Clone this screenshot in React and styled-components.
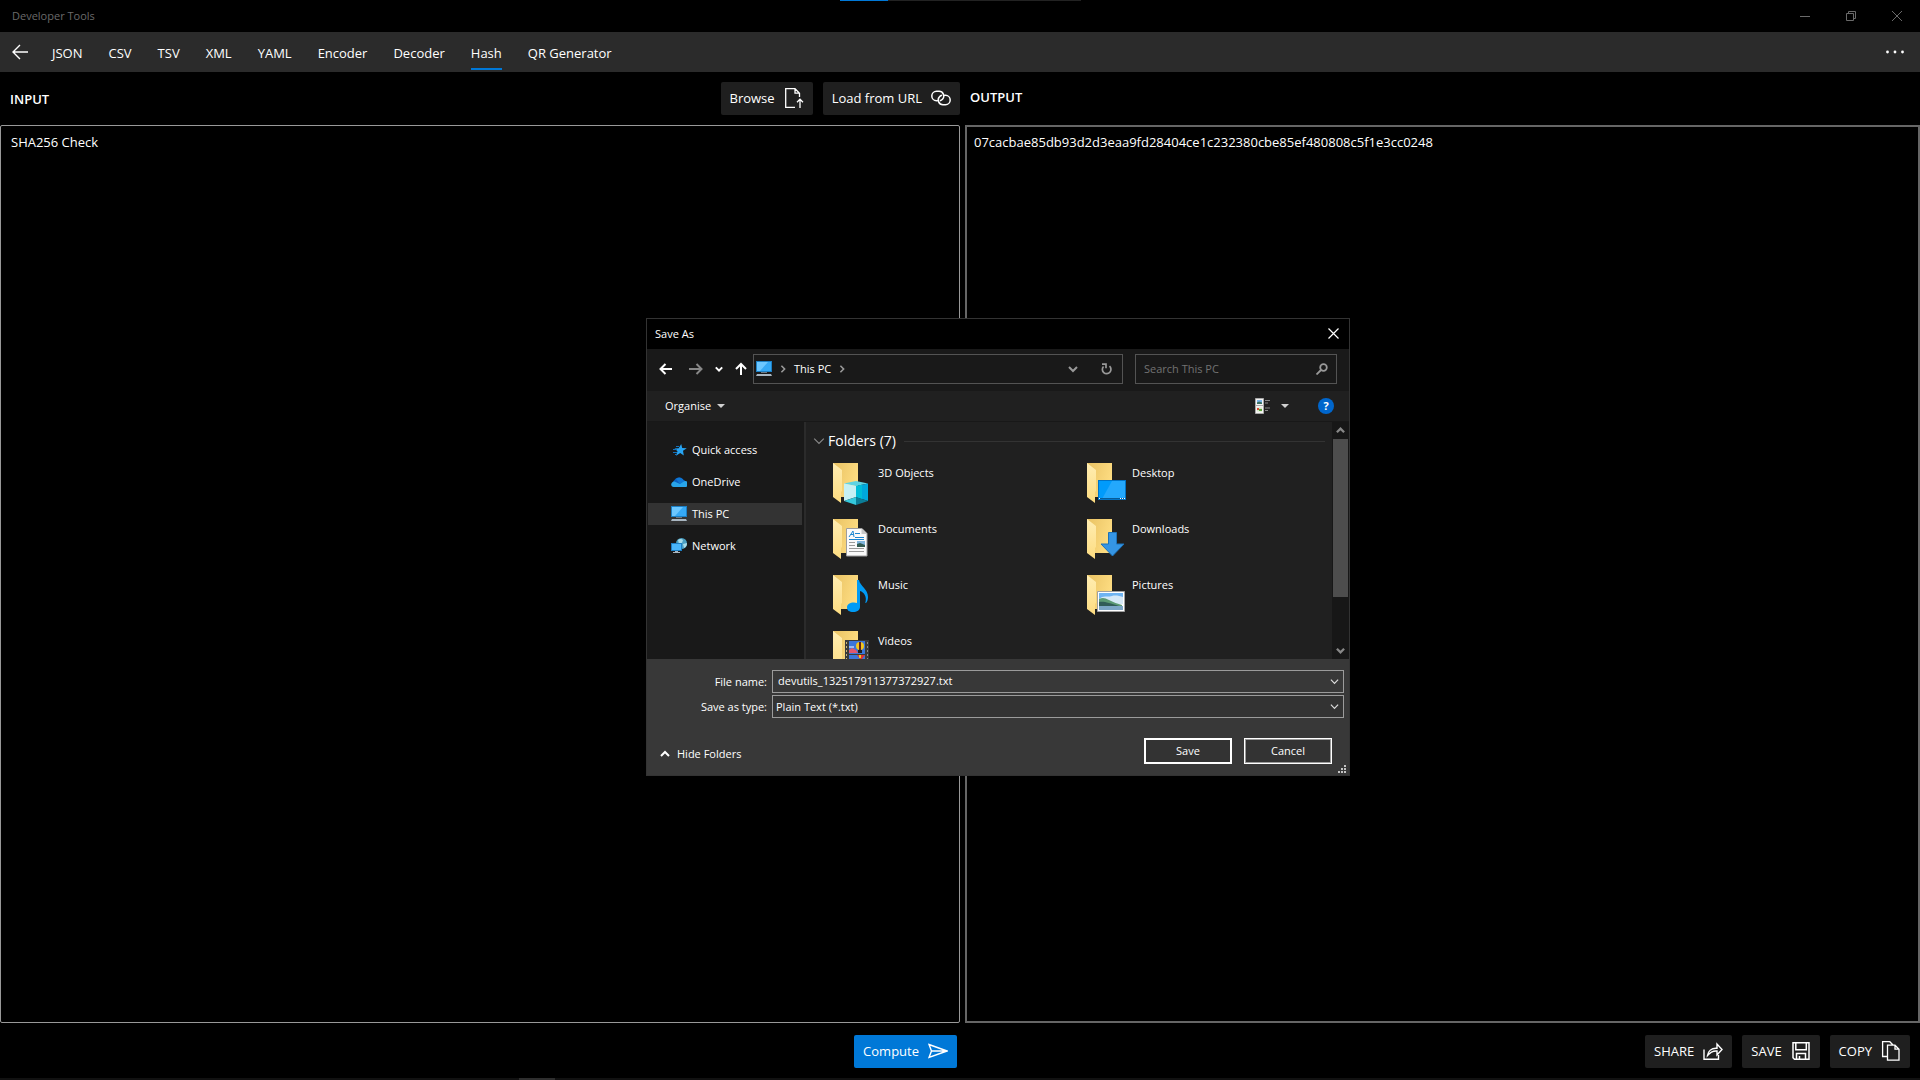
import React, { useState } from 'react';
import styled, { createGlobalStyle } from 'styled-components';

const tabs = ['JSON', 'CSV', 'TSV', 'XML', 'YAML', 'Encoder', 'Decoder', 'Hash', 'QR Generator'];

const places = [
  { name: 'Quick access', icon: 'star' },
  { name: 'OneDrive', icon: 'cloud' },
  { name: 'This PC', icon: 'pc', selected: true },
  { name: 'Network', icon: 'network' },
];

const folders = [
  { name: '3D Objects', kind: 'cube' },
  { name: 'Desktop', kind: 'desktop' },
  { name: 'Documents', kind: 'document' },
  { name: 'Downloads', kind: 'download' },
  { name: 'Music', kind: 'music' },
  { name: 'Pictures', kind: 'picture' },
  { name: 'Videos', kind: 'video' },
];

const GlobalStyle = createGlobalStyle`
  * {
    box-sizing: border-box;
  }
  body {
    margin: 0;
    background: #000;
    color: #fff;
    font-family: 'Open Sans', 'Noto Sans', sans-serif;
    font-size: 13px;
    line-height: 20px;
  }
  button, input, select, textarea {
    font: inherit;
    color: inherit;
    margin: 0;
  }
  svg {
    display: block;
    flex: none;
  }
`;

const glyphs = {
  back: <path strokeWidth="1.400" d="M18 10H3M10 3L3 10l7 7" />,
  browse: <path strokeWidth="1.300" d="M11 19.300H1.700V.7h9.300l4.500 4.500V9M11 .7v4.500h4.500M16 20v-8.500M13 14.200l3-3 3 3" />,
  link: (
    <path
      strokeWidth="1.500"
      d="M6.500 12.700h-1a4.700 4.700 0 0 1 0-9.400h2.500a4.700 4.700 0 0 1 3.500 7.900c-.8.900-1.600 1.300-2.500 1.500M13.500 7.300h1a4.700 4.700 0 0 1 0 9.400h-2.500a4.700 4.700 0 0 1-3.500-7.900c.8-.9 1.600-1.300 2.500-1.500"
    />
  ),
  send: <path strokeWidth="1.400" d="M1 3.500L19 10 1 16.500 3.500 10zM3.500 10H19" />,
  share: <path strokeWidth="1.400" d="M1 8.500v9.800h14.500V14M4.500 14.500c.5-4.500 4-7.300 8.500-7.300h1V3l5 5.500-5 5.500V10h-1c-3.500 0-6 1.500-8.500 4.500z" />,
  save: <path strokeWidth="1.500" d="M2 1.800h16v16.500H3.500L2 16.800zM4.800 1.800v7h10.500v-7M5.500 18v-5.500h9V18M8.500 18v-3" />,
  copy: <path strokeWidth="1.300" d="M6 15.500H1.600V.7h7.200L12 4M6.500 4.200h7.500l4 4v11H6.500zM14 4.200v4h4" />,
};

const Glyph = ({ name, size = 20 }) => (
  <svg width={size} height={size} viewBox="0 0 20 20" fill="none" stroke="currentColor" aria-hidden="true">
    {glyphs[name]}
  </svg>
);

const Chevron = ({ dir = 'down', size = 9, width = 1.5 }) => {
  const paths = { down: 'M1 3l4 4 4-4', up: 'M1 7l4-4 4 4', right: 'M3 1l4 4-4 4' };
  return (
    <svg width={size} height={size} viewBox="0 0 10 10" fill="none" stroke="currentColor" strokeWidth={width} aria-hidden="true">
      <path d={paths[dir]} />
    </svg>
  );
};

const Caret = () => (
  <svg width="8" height="4" viewBox="0 0 8 4" fill="#d0d0d0" aria-hidden="true">
    <path d="M0 0h8L4 4z" />
  </svg>
);

const Monitor = () => (
  <g>
    <path d="M0 0h16v11H0z" fill="#1c7fc4" />
    <path d="M1 1h14v9H1z" fill="#36a9f5" />
    <path d="M1 1h11L4 10H1z" fill="#6cc7ff" />
    <path d="M5 11h6v1H5z" fill="#6d7a85" />
    <path d="M1 13h14l1 2H0z" fill="#a9b6c1" />
  </g>
);

const PlaceIcon = ({ name }) => (
  <svg width="16" height="16" viewBox="0 0 16 16" aria-hidden="true">
    {name === 'star' && (
      <g>
        <path d="M10.200 2l1 4 4.600.2-3.800 2.600.8 4.700-3.600-2.600-4.200 2.900 1.500-4.500L3.500 6.500l4.200-.3z" fill="#27a4f2" />
        <path d="M5 4.500h3M2 7.500h4M2 10.500h4M4 12.500h2" stroke="#1372bd" />
      </g>
    )}
    {name === 'cloud' && (
      <g>
        <path d="M2.500 11A3.500 3.500 0 0 1 3.500 6 5 5 0 0 1 12 5.500 4 4 0 0 1 14 12z" fill="#0a5fc0" />
        <path d="M5 5a5 5 0 0 1 8 2L9 10z" fill="#0f78d4" />
        <path d="M1 12.500A3 3 0 0 1 3.500 7.500L9 10l4-2.800A2.900 2.900 0 0 1 15 13H2.500z" fill="#28a5ea" />
      </g>
    )}
    {name === 'pc' && <Monitor />}
    {name === 'network' && (
      <g>
        <circle cx="10.500" cy="5.500" r="5.500" fill="#4a9fc2" />
        <path d="M7 2c2-1.500 4-1 5 0l-1 3-3 1zM12 6l4-1c0 3-1 4-3 5z" fill="#a9dbe8" />
        <path d="M0 5h11v8H0z" fill="#1c7fc4" />
        <path d="M1 6h9v6H1z" fill="#4ab6fa" />
        <path d="M4 13h3v1h2v1H2v-1h2z" fill="#a9b6c1" />
      </g>
    )}
  </svg>
);

const overlays = {
  cube: (
    <g>
      <path d="M23 18l12 2.500L23 23l-12-2.500z" fill="#5ed3e3" />
      <path d="M11 20.500L23 23v11l-12 4z" fill="#c6f0f4" />
      <path d="M23 23l12-2.500V38l-12-4z" fill="#00a8dc" />
      <path d="M23 23l6-1.300V36l-6-2z" fill="#00bdd8" />
      <path d="M11 38l12-4v8z" fill="#35c8dc" />
      <path d="M35 38l-12-4v8z" fill="#0b7d97" />
    </g>
  ),
  desktop: (
    <g>
      <path d="M11 17h28v20H11z" fill="#0073c6" />
      <path d="M12 18h26v18H12z" fill="#009bfb" />
      <path d="M25 18h13v18H15z" fill="#24a8fc" />
      <path d="M12 35h26v1H12z" fill="#075b96" />
      <path d="M12 35h1v1h-1zM33 35h1v1h-1zM35 35h1v1h-1zM37 35h1v1h-1z" fill="#fff" />
    </g>
  ),
  document: (
    <g>
      <path d="M13.500 9.500H29l5 5v22.500H13.500z" fill="#fafafa" stroke="#9d9d9d" />
      <path d="M28.500 9.500l5.500 5.500h-5.500z" fill="#c9c9c9" />
      <path d="M16 18l4-6 1 6M17.500 15.500h3M22 14.500h5M22 18.500h9M16 20.500h15" stroke="#1c86d1" fill="none" />
      <path d="M16 23.500h6M16 26.500h6M16 29.500h15M16 32.500h15" stroke="#9a9a9a" />
      <path d="M24 22h8v6h-8z" fill="#7fb4dc" />
      <path d="M24 25l3-1 5 2v2h-8z" fill="#345c52" />
    </g>
  ),
  download: (
    <path d="M21.500 13.500h8V25H37L25.500 37 14 25h7.500z" fill="#3595e4" stroke="#1d72b8" />
  ),
  music: (
    <path
      d="M24 5h2c1 6 9 9 9 17 0 3-1 5-2 6-.500 0-1-.500-.500-1C34 22 31 17 27 16v16c0 3-3 5-7 5-3.500 0-6-1.500-6-4.500 0-3.500 3-5 7-5 1 0 2 .2 3 .5z"
      fill="#009bf5"
    />
  ),
  picture: (
    <g>
      <path d="M10.500 16.500h27v20h-27z" fill="#fff" stroke="#a0a0a0" />
      <path d="M12 18h24v9H12z" fill="#6fb4f2" />
      <path d="M15 22c5-1 7 0 10-1s8 0 11 1v7H12v-5z" fill="#d6e9f7" />
      <path d="M12 24c4-2 6-1 10 1 4 2 9 4 13 5v1H12z" fill="#5b9a74" />
      <path d="M12 27c5-1 10 1 20 4H12z" fill="#315c58" />
      <path d="M12 31h24v4H12z" fill="#7ba6c6" />
    </g>
  ),
  video: (
    <g>
      <path d="M12 9h24v30H12z" fill="#3a3a3a" />
      <path d="M16 10h16v13H16zM16 24h16v13H16z" fill="#3b76da" />
      <path d="M13.500 11v26" stroke="#c9b878" strokeDasharray="2 2" />
      <path d="M34.500 11v26" stroke="#8a8a8a" strokeDasharray="2 2" />
      <path d="M16 19l3-2 4 2 2 3h-9z" fill="#e0566e" />
      <circle cx="27" cy="15" r="4" fill="#f3c51d" />
      <path d="M27 11v8" stroke="#5e2020" strokeWidth="2" />
      <path d="M25 19h4v3h-4z" fill="#1f1f1f" />
      <path d="M16 15h5v2h-5z" fill="#9cbcf0" />
      <path d="M24 24h8l-3 4h-2z" fill="#e13232" />
      <path d="M26 24h2v3h-2z" fill="#f3c51d" />
    </g>
  ),
};

const FolderIcon = ({ kind }) => (
  <svg width="40" height="42" viewBox="0 0 40 42" aria-hidden="true">
    <defs>
      <linearGradient id={`back-${kind}`} x1="0" y1="0" x2="1" y2="0.400">
        <stop offset="0" stopColor="#e9c263" />
        <stop offset="1" stopColor="#fddc81" />
      </linearGradient>
      <linearGradient id={`flap-${kind}`} x1="0" y1="0" x2="0" y2="1">
        <stop offset="0" stopColor="#ffedb2" />
        <stop offset="1" stopColor="#fddc80" />
      </linearGradient>
    </defs>
    <path d="M0 0h25v34H0z" fill={`url(#back-${kind})`} />
    <path d="M0 0l9 7v21l-1 1v11L0 34z" fill={`url(#flap-${kind})`} />
    {overlays[kind]}
  </svg>
);

const App = () => {
  const [text, setText] = useState('SHA256 Check');
  const [fileName, setFileName] = useState('devutils_132517911377372927.txt');

  return (
    <Page>
      <GlobalStyle />
      <Progress>
        <ProgressDone />
      </Progress>
      <TitleBar>
        <AppTitle>Developer Tools</AppTitle>
        <WindowButton aria-label="Minimise">
          <svg width="10" height="10" viewBox="0 0 10 10" stroke="currentColor" fill="none"><path d="M0 5.500h10" /></svg>
        </WindowButton>
        <WindowButton aria-label="Restore">
          <svg width="10" height="10" viewBox="0 0 10 10" stroke="currentColor" fill="none"><path d="M.5 2.500h7v7h-7zM2.500 2.500v-2h7v7h-2" /></svg>
        </WindowButton>
        <WindowButton aria-label="Close">
          <svg width="10" height="10" viewBox="0 0 10 10" stroke="currentColor" fill="none"><path d="M0 0l10 10M10 0L0 10" /></svg>
        </WindowButton>
      </TitleBar>

      <NavBar>
        <NavButton aria-label="Back"><Glyph name="back" /></NavButton>
        {tabs.map((tab) => (
          <Tab key={tab} href={`#${tab}`} $active={tab === 'Hash'}>{tab}</Tab>
        ))}
        <MoreButton aria-label="More">
          <svg width="18" height="4" viewBox="0 0 18 4" fill="currentColor">
            <circle cx="1.500" cy="2" r="1.400" />
            <circle cx="9" cy="2" r="1.400" />
            <circle cx="16.500" cy="2" r="1.400" />
          </svg>
        </MoreButton>
      </NavBar>

      <Workspace>
        <Pane>
          <PaneHeader>
            <PaneTitle htmlFor="source">INPUT</PaneTitle>
            <Action>Browse<Glyph name="browse" /></Action>
            <Action>Load from URL<Glyph name="link" /></Action>
          </PaneHeader>
          <SourceBox id="source" value={text} onChange={(e) => setText(e.target.value)} spellCheck={false} />
          <PaneFooter $end={3}>
            <Action $primary>Compute<Glyph name="send" /></Action>
          </PaneFooter>
        </Pane>
        <Pane $inset>
          <PaneHeader>
            <PaneTitle htmlFor="result" $raised>OUTPUT</PaneTitle>
          </PaneHeader>
          <ResultBox
            id="result"
            readOnly
            spellCheck={false}
            value="07cacbae85db93d2d3eaa9fd28404ce1c232380cbe85ef480808c5f1e3cc0248"
          />
          <PaneFooter $end={10}>
            <Action>SHARE<Glyph name="share" /></Action>
            <Action>SAVE<Glyph name="save" /></Action>
            <Action>COPY<Glyph name="copy" /></Action>
          </PaneFooter>
        </Pane>
      </Workspace>
      <TaskStrip><TaskMark /></TaskStrip>

      <Dialog role="dialog" aria-labelledby="dialog-title">
        <DialogTitle>
          <span id="dialog-title">Save As</span>
          <PlainButton aria-label="Close dialog">
            <svg width="11" height="11" viewBox="0 0 11 11" stroke="currentColor" strokeWidth="1.200"><path d="M.5.5l10 10M10.500.5l-10 10" /></svg>
          </PlainButton>
        </DialogTitle>

        <AddressRow>
          <HistoryButtons>
            <PlainButton aria-label="Back">
              <svg width="14" height="12" viewBox="0 0 14 12" fill="none" stroke="#fff" strokeWidth="2"><path d="M13 6H2M6.500 1l-5 5 5 5" /></svg>
            </PlainButton>
            <PlainButton aria-label="Forward">
              <svg width="14" height="12" viewBox="0 0 14 12" fill="none" stroke="#888" strokeWidth="2"><path d="M0 6h12M7.500 1l5 5-5 5" /></svg>
            </PlainButton>
            <PlainButton aria-label="Recent locations"><Chevron size={8} width={2.5} /></PlainButton>
            <PlainButton aria-label="Up">
              <svg width="12" height="14" viewBox="0 0 12 14" fill="none" stroke="#fff" strokeWidth="2"><path d="M6 13V2M1 7l5-5 5 5" /></svg>
            </PlainButton>
          </HistoryButtons>
          <AddressBox>
            <svg width="16" height="16" viewBox="0 0 16 16" aria-hidden="true"><Monitor /></svg>
            <Crumb><Chevron dir="right" size={8} width={2} /></Crumb>
            <PlainButton>This PC</PlainButton>
            <Crumb><Chevron dir="right" size={8} width={2} /></Crumb>
            <AddressTools>
              <PlainButton aria-label="Previous locations"><Chevron size={10} width={2} /></PlainButton>
              <PlainButton aria-label="Refresh">
                <svg width="11" height="12" viewBox="0 0 11 12" fill="none" stroke="currentColor" strokeWidth="1.700">
                  <path d="M8.500 3.200A4.300 4.300 0 1 1 2.500 3.500M1 1.200h4v4" />
                </svg>
              </PlainButton>
            </AddressTools>
          </AddressBox>
          <SearchBox>
            <SearchInput type="text" placeholder="Search This PC" aria-label="Search This PC" />
            <svg width="12" height="12" viewBox="0 0 12 12" fill="none" stroke="currentColor" strokeWidth="1.800" aria-hidden="true">
              <circle cx="7.500" cy="4.500" r="3.300" />
              <path d="M5 7l-4.500 4.500" />
            </svg>
          </SearchBox>
        </AddressRow>

        <CommandBar>
          <PlainButton>Organise<Caret /></PlainButton>
          <ViewTools>
            <PlainButton aria-label="Change view">
              <svg width="16" height="16" viewBox="0 0 16 16">
                <path d="M.5.5h8v15h-8z" fill="#f4f4f4" stroke="#aaa" />
                <path d="M2 2h5v4H2z" fill="#7db5e8" />
                <path d="M2 4.500l2-1 3 1V6H2z" fill="#386f62" />
                <path d="M0 7.500h9" stroke="#aaa" />
                <path d="M2 9.500h5v4H2z" fill="#d9e8c8" />
                <path d="M2 10h2v2H2z" fill="#d94b35" />
                <path d="M4 11h3v2H4z" fill="#5ba03a" />
                <path d="M10 2.500h5M10 5h3M10 10h5M10 12.500h3" stroke="#8a8a8a" />
              </svg>
            </PlainButton>
            <PlainButton aria-label="View options"><Caret /></PlainButton>
            <HelpButton aria-label="Help">?</HelpButton>
          </ViewTools>
        </CommandBar>

        <Browser>
          <Places>
            {places.map((place) => (
              <Place key={place.name} $selected={place.selected}>
                <PlaceIcon name={place.icon} />
                {place.name}
              </Place>
            ))}
          </Places>
          <Files>
            <GroupHeader>
              <GroupToggle aria-label="Collapse folders"><Chevron size={12} width={1} /></GroupToggle>
              <h2>Folders (7)</h2>
              <GroupLine />
            </GroupHeader>
            <FolderGrid>
              {folders.map((folder) => (
                <Folder key={folder.name}>
                  <FolderIcon kind={folder.kind} />
                  <span>{folder.name}</span>
                </Folder>
              ))}
            </FolderGrid>
          </Files>
          <Scrollbar>
            <Chevron dir="up" size={9} width={2.5} />
            <ScrollTrack><ScrollThumb /></ScrollTrack>
            <Chevron size={9} width={2.5} />
          </Scrollbar>
        </Browser>

        <SaveForm>
          <Field>
            <label htmlFor="file-name">File name:</label>
            <Combo>
              <NameInput id="file-name" value={fileName} onChange={(e) => setFileName(e.target.value)} />
              <Chevron size={9} width={1.3} />
            </Combo>
          </Field>
          <Field>
            <label htmlFor="file-type">Save as type:</label>
            <Combo $dark>
              <TypeSelect id="file-type">
                <option>Plain Text (*.txt)</option>
              </TypeSelect>
              <Chevron size={9} width={1.3} />
            </Combo>
          </Field>
          <DialogActions>
            <HideButton type="button"><Chevron dir="up" size={10} width={2} />Hide Folders</HideButton>
            <DialogButton type="button" $default>Save</DialogButton>
            <DialogButton type="button">Cancel</DialogButton>
          </DialogActions>
        </SaveForm>
        <Grip width="8" height="8" viewBox="0 0 8 8" fill="#c4c4c4" aria-hidden="true">
          <path d="M6 0h2v2H6zM3 3h2v2H3zM6 3h2v2H6zM0 6h2v2H0zM3 6h2v2H3zM6 6h2v2H6z" />
        </Grip>
      </Dialog>
    </Page>
  );
};

const Page = styled.div`
  position: relative;
  display: flex;
  flex-direction: column;
  min-height: 100vh;
`;

const Progress = styled.div`
  position: absolute;
  top: 0;
  left: 840px;
  width: 241px;
  height: 1px;
  background: #222;
`;

const ProgressDone = styled.div`
  width: 20%;
  height: 1px;
  background: #0078d7;
`;

const TitleBar = styled.header`
  display: flex;
  align-items: center;
  height: 32px;
  color: #6a6a6a;
`;

const AppTitle = styled.span`
  flex: 1;
  padding-left: 12px;
  font-size: 11px;
`;

const WindowButton = styled.button`
  display: flex;
  align-items: center;
  justify-content: center;
  width: 46px;
  height: 32px;
  padding: 0;
  border: 0;
  background: none;
`;

const NavBar = styled.nav`
  display: flex;
  align-items: center;
  gap: 26px;
  height: 40px;
  padding: 0 16px 0 10px;
  background: #2b2b2b;
`;

const NavButton = styled.button`
  padding: 0;
  margin-right: -4px;
  border: 0;
  background: none;
`;

const Tab = styled.a`
  display: flex;
  align-items: center;
  height: 32px;
  margin-top: 4px;
  border-bottom: 2px solid ${({ $active }) => ($active ? '#0078d7' : 'transparent')};
  padding-bottom: 1px;
  color: #fff;
  text-decoration: none;
`;

const MoreButton = styled(NavButton)`
  margin: 0 0 0 auto;
`;

const Workspace = styled.main`
  flex: 1;
  display: grid;
  grid-template-columns: 1fr 1fr;
`;

const Pane = styled.section`
  display: flex;
  flex-direction: column;
  padding-left: ${({ $inset }) => ($inset ? '5px' : '0')};
`;

const PaneHeader = styled.div`
  display: flex;
  align-items: center;
  gap: 10px;
  height: 53px;
`;

const PaneTitle = styled.label`
  flex: 1;
  padding-left: ${({ $raised }) => ($raised ? '5px' : '10px')};
  padding-bottom: ${({ $raised }) => ($raised ? '4px' : '0')};
  font-weight: 600;
`;

const Action = styled.button`
  display: flex;
  align-items: center;
  gap: 9px;
  height: 33px;
  padding: 0 9px 2px;
  border: 0;
  border-radius: 2px;
  background: ${({ $primary }) => ($primary ? '#0078d7' : '#1f1f1f')};
`;

const TextBox = styled.textarea`
  flex: 1;
  width: 100%;
  background: #000;
  resize: none;
  outline: 0;
`;

const SourceBox = styled(TextBox)`
  padding: 6px 10px;
  border: 1px solid #999;
  border-radius: 2px;
`;

const ResultBox = styled(TextBox)`
  padding: 5px 7px;
  border: 2px solid #666;
`;

const PaneFooter = styled.div`
  display: flex;
  justify-content: flex-end;
  gap: 10px;
  padding: 12px ${({ $end }) => $end}px 10px 0;
`;

const TaskStrip = styled.div`
  height: 2px;
  background: #111;
`;

const TaskMark = styled.div`
  width: 36px;
  height: 2px;
  margin-left: 519px;
  background: #2e2e2e;
`;

const Dialog = styled.div`
  position: absolute;
  top: 318px;
  left: 646px;
  width: 704px;
  border: 1px solid #333;
  background: #191919;
  font-size: 11px;
  line-height: 16px;
`;

const PlainButton = styled.button`
  display: flex;
  align-items: center;
  gap: 6px;
  padding: 0;
  border: 0;
  background: none;
`;

const DialogTitle = styled.div`
  display: flex;
  align-items: center;
  justify-content: space-between;
  height: 30px;
  padding: 0 10px 1px 8px;
  background: #000;
`;

const AddressRow = styled.div`
  display: flex;
  align-items: center;
  height: 42px;
  padding: 0 12px 2px;
`;

const HistoryButtons = styled.div`
  display: flex;
  align-items: center;
  gap: 12px;
  width: 94px;
  flex: none;

  button:nth-child(2) {
    margin-left: 4px;
  }
`;

const AddressBox = styled.div`
  flex: 1;
  display: flex;
  align-items: center;
  height: 30px;
  margin-right: 12px;
  padding-left: 2px;
  border: 1px solid #535353;
`;

const Crumb = styled.span`
  display: flex;
  justify-content: center;
  width: 22px;
  color: #999;
`;

const AddressTools = styled.div`
  display: flex;
  gap: 23px;
  margin-left: auto;
  padding-right: 10px;
  color: #999;
`;

const SearchBox = styled.div`
  display: flex;
  align-items: center;
  width: 202px;
  height: 30px;
  padding: 0 8px;
  border: 1px solid #535353;
  color: #999;
`;

const SearchInput = styled.input`
  flex: 1;
  min-width: 0;
  padding: 0;
  border: 0;
  background: none;

  &::placeholder {
    color: #727272;
    opacity: 1;
  }
`;

const CommandBar = styled.div`
  display: flex;
  align-items: center;
  justify-content: space-between;
  height: 31px;
  padding: 0 15px 0 18px;
  border-bottom: 1px solid #181818;
  background: #202020;
`;

const ViewTools = styled.div`
  display: flex;
  align-items: center;
  gap: 10px;
`;

const HelpButton = styled.button`
  width: 16px;
  height: 16px;
  margin-left: 19px;
  padding: 0;
  border: 0;
  border-radius: 50%;
  background: #0066cc;
  font-weight: 700;
`;

const Browser = styled.div`
  display: flex;
  height: 237px;
`;

const Places = styled.div`
  display: flex;
  flex-direction: column;
  gap: 10px;
  width: 159px;
  padding: 17px 2px 0 1px;
  border-right: 2px solid #2b2b2b;
`;

const Place = styled.button`
  display: flex;
  align-items: center;
  gap: 5px;
  height: 22px;
  padding: 0 0 0 23px;
  border: 0;
  background: ${({ $selected }) => ($selected ? '#333' : 'none')};
`;

const Files = styled.div`
  flex: 1;
  min-width: 0;
  overflow: hidden;
  padding: 9px 7px 0;
  background: #202020;
`;

const GroupHeader = styled.div`
  display: flex;
  align-items: center;
  height: 20px;

  h2 {
    margin: 0;
    font-size: 14px;
    font-weight: 400;
  }
`;

const GroupToggle = styled(PlainButton)`
  width: 15px;
  color: #888;
`;

const GroupLine = styled.div`
  flex: 1;
  height: 1px;
  margin-left: 8px;
  background: #333;
`;

const FolderGrid = styled.div`
  display: grid;
  grid-template-columns: 254px 1fr;
  grid-auto-rows: 56px;
  padding: 12px 0 0 20px;
`;

const Folder = styled.button`
  display: flex;
  align-items: flex-start;
  gap: 5px;
  height: 42px;
  padding: 0;
  border: 0;
  background: none;

  span {
    padding-top: 2px;
  }
`;

const Scrollbar = styled.div`
  display: flex;
  flex-direction: column;
  align-items: center;
  width: 17px;
  padding: 4px 0;
  background: #171717;
  color: #888;
`;

const ScrollTrack = styled.div`
  flex: 1;
  width: 15px;
  margin: 4px 0;
`;

const ScrollThumb = styled.div`
  height: 78%;
  background: #4d4d4d;
`;

const SaveForm = styled.form`
  padding: 11px 5px 11px;
  background: #383838;
`;

const Field = styled.div`
  display: flex;
  align-items: center;
  height: 23px;
  margin-bottom: 2px;

  label {
    width: 120px;
    padding-right: 5px;
    text-align: right;
  }
`;

const Combo = styled.div`
  flex: 1;
  display: flex;
  align-items: center;
  height: 23px;
  padding-right: 4px;
  border: 1px solid #9b9b9b;
  background: ${({ $dark }) => ($dark ? '#333' : '#383838')};
  color: #ddd;
`;

const NameInput = styled.input`
  flex: 1;
  min-width: 0;
  padding: 0 5px 2px;
  border: 0;
  outline: 0;
  background: none;
  color: #fff;
`;

const TypeSelect = styled.select`
  flex: 1;
  padding: 0 3px;
  border: 0;
  background: none;
  color: #fff;
  appearance: none;
`;

const DialogActions = styled.div`
  display: flex;
  align-items: center;
  gap: 12px;
  margin-top: 20px;
  padding: 0 12px 0 8px;
`;

const HideButton = styled(PlainButton)`
  gap: 7px;
  margin: 6px auto 0 0;
`;

const DialogButton = styled.button`
  width: 88px;
  height: 26px;
  padding: 0;
  border: 1px solid #fff;
  box-shadow: inset 0 0 0 1px ${({ $default }) => ($default ? '#fff' : '#9b9b9b')};
  background: #333;
`;

const Grip = styled.svg`
  position: absolute;
  right: 3px;
  bottom: 2px;
`;

export default App;
